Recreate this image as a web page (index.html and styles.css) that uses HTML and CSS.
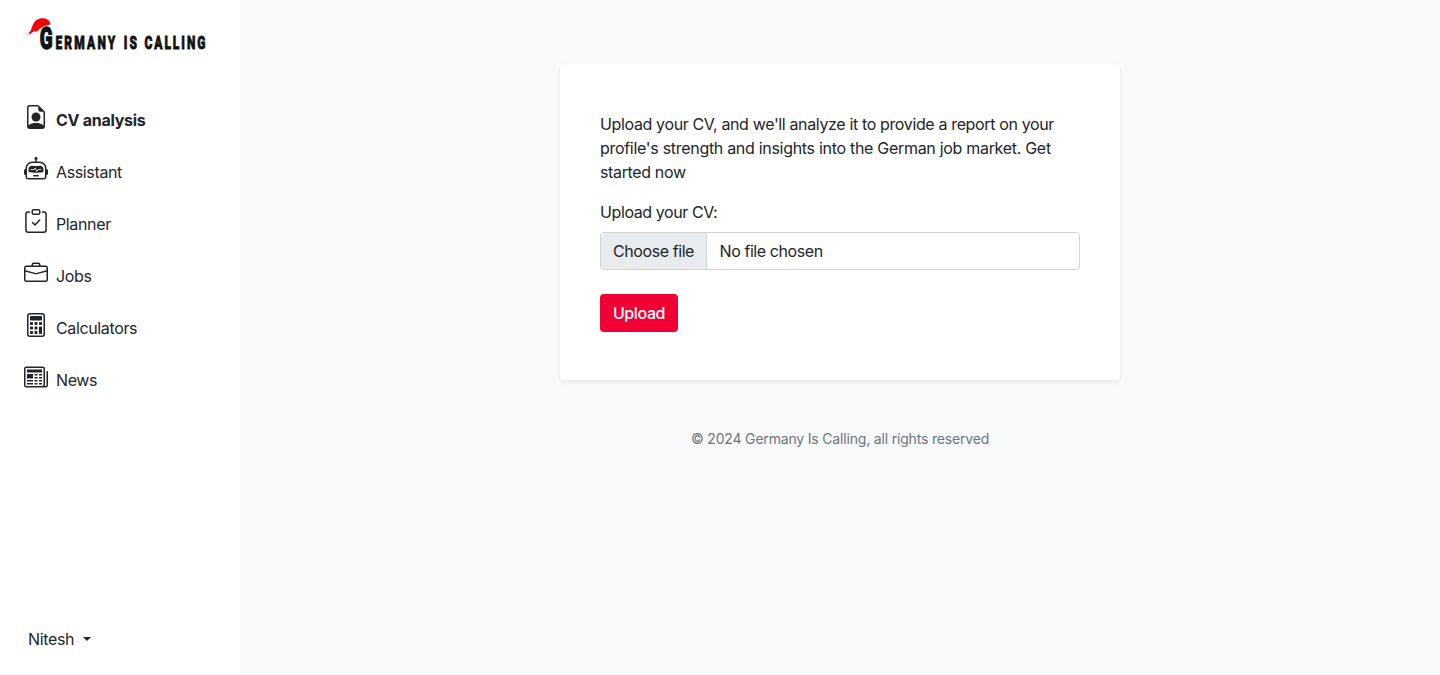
FILE: index.html
```html
<!DOCTYPE html>
<html lang="en">
<head>
<meta charset="utf-8">
<title>Germany Is Calling</title>
<link rel="stylesheet" href="styles.css">
</head>
<body>
<aside class="sidebar">
  <a class="logo" aria-label="Germany Is Calling">
    <svg width="188" height="40" viewBox="0 0 188 40">
      <path fill="#fff" stroke="#ddd" stroke-width=".4" d="M13 17Q18 11 26 9.500L27 12Q19 13 14 19z"/>
      <path fill="#f50008" d="M4 18.500Q7 16.500 8 12C10 5.500 14 3 19 3.200C24 3.800 26 6 26.500 9.500Q18 10.500 13 16.500Q10 15.500 7 18.500Q5 20.500 4 18.500z"/>
      <circle cx="3.500" cy="19" r="1.700" fill="#eee" stroke="#ccc" stroke-width=".5"/>
      <g class="logo-text">
        <text class="logo-cap" transform="translate(15.800 34.300) scale(.61 1)">G</text>
        <text class="logo-word" transform="translate(31.500 34) scale(.63 1)" textLength="95" lengthAdjust="spacing">ERMANY</text>
        <text class="logo-word" transform="translate(99.800 34) scale(.63 1)" textLength="21" lengthAdjust="spacing">IS</text>
        <text class="logo-word" transform="translate(120.400 34) scale(.63 1)" textLength="97" lengthAdjust="spacing">CALLING</text>
      </g>
    </svg>
  </a>
  <nav class="nav">
    <a class="nav-item active"><svg class="icon" viewBox="0 0 16 16"><path d="M11 8a3 3 0 1 1-6 0 3 3 0 0 1 6 0"/><path d="M14 14V4.500L9.500 0H4a2 2 0 0 0-2 2v12a2 2 0 0 0 2 2h8a2 2 0 0 0 2-2M9.500 3A1.500 1.500 0 0 0 11 4.500h2v9.255S12 12 8 12s-5 1.755-5 1.755V2a1 1 0 0 1 1-1h5.500z"/></svg><span>CV analysis</span></a>
    <a class="nav-item"><svg class="icon" viewBox="0 0 16 16"><path d="M6 12.500a.5.5 0 0 1 .5-.5h3a.5.5 0 0 1 0 1h-3a.5.5 0 0 1-.5-.5M3 8.062C3 6.760 4.235 5.765 5.530 5.886a26.600 26.600 0 0 0 4.940 0C11.765 5.765 13 6.760 13 8.062v1.157a.93.93 0 0 1-.765.935c-.845.147-2.340.346-4.235.346s-3.390-.2-4.235-.346A.93.93 0 0 1 3 9.219zm4.542-.827a.25.25 0 0 0-.217.068l-.92.9a25 25 0 0 1-1.871-.183.25.25 0 0 0-.068.495c.55.076 1.232.149 2.020.193a.25.25 0 0 0 .189-.071l.754-.736.847 1.710a.25.25 0 0 0 .404.062l.932-.97a25 25 0 0 0 1.922-.188.25.25 0 0 0-.068-.495c-.538.074-1.207.145-1.980.189a.25.25 0 0 0-.166.076l-.754.785-.842-1.700a.25.25 0 0 0-.182-.135"/><path d="M8.500 1.866a1 1 0 1 0-1 0V3h-2A4.500 4.500 0 0 0 1 7.500V8a1 1 0 0 0-1 1v2a1 1 0 0 0 1 1v1a2 2 0 0 0 2 2h10a2 2 0 0 0 2-2v-1a1 1 0 0 0 1-1V9a1 1 0 0 0-1-1v-.5A4.500 4.500 0 0 0 10.500 3h-2zM14 7.500V13a1 1 0 0 1-1 1H3a1 1 0 0 1-1-1V7.500A3.500 3.500 0 0 1 5.500 4h5A3.500 3.500 0 0 1 14 7.500"/></svg><span>Assistant</span></a>
    <a class="nav-item"><svg class="icon line" viewBox="0 0 24 24"><rect x="8.200" y=".8" width="7.600" height="4.500" rx="1.500"/><path d="M5.500 3H4A2.200 2.200 0 0 0 1.900 5.200V21A2.200 2.200 0 0 0 4.100 23.200H19.900A2.200 2.200 0 0 0 22.100 21V5.200A2.200 2.200 0 0 0 20 3H18.500M8.500 13.500l2.500 2.500 4.700-5"/></svg><span>Planner</span></a>
    <a class="nav-item"><svg class="icon" viewBox="0 0 16 16"><path d="M6.500 1A1.500 1.500 0 0 0 5 2.500V3H1.500A1.500 1.500 0 0 0 0 4.500v8A1.500 1.500 0 0 0 1.500 14h13a1.500 1.500 0 0 0 1.500-1.500v-8A1.500 1.500 0 0 0 14.500 3H11v-.5A1.500 1.500 0 0 0 9.500 1zm0 1h3a.5.5 0 0 1 .5.5V3H6v-.5a.5.5 0 0 1 .5-.5m1.886 6.914L15 7.151V12.500a.5.5 0 0 1-.5.5h-13a.5.5 0 0 1-.5-.5V7.150l6.614 1.764a1.500 1.500 0 0 0 .772 0M1.500 4h13a.5.5 0 0 1 .5.5v1.616L8.129 7.948a.5.5 0 0 1-.258 0L1 6.116V4.500a.5.5 0 0 1 .5-.5"/></svg><span>Jobs</span></a>
    <a class="nav-item"><svg class="icon" viewBox="0 0 16 16"><path d="M12 1a1 1 0 0 1 1 1v12a1 1 0 0 1-1 1H4a1 1 0 0 1-1-1V2a1 1 0 0 1 1-1zM4 0a2 2 0 0 0-2 2v12a2 2 0 0 0 2 2h8a2 2 0 0 0 2-2V2a2 2 0 0 0-2-2z"/><path d="M4 2.500a.5.5 0 0 1 .5-.5h7a.5.5 0 0 1 .5.5v2a.5.5 0 0 1-.5.5h-7a.5.5 0 0 1-.5-.5zm0 4a.5.5 0 0 1 .5-.5h1a.5.5 0 0 1 .5.5v1a.5.5 0 0 1-.5.5h-1a.5.5 0 0 1-.5-.5zm0 3a.5.5 0 0 1 .5-.5h1a.5.5 0 0 1 .5.5v1a.5.5 0 0 1-.5.5h-1a.5.5 0 0 1-.5-.5zm0 3a.5.5 0 0 1 .5-.5h1a.5.5 0 0 1 .5.5v1a.5.5 0 0 1-.5.5h-1a.5.5 0 0 1-.5-.5zm3-6a.5.5 0 0 1 .5-.5h1a.5.5 0 0 1 .5.5v1a.5.5 0 0 1-.5.5h-1a.5.5 0 0 1-.5-.5zm0 3a.5.5 0 0 1 .5-.5h1a.5.5 0 0 1 .5.5v1a.5.5 0 0 1-.5.5h-1a.5.5 0 0 1-.5-.5zm0 3a.5.5 0 0 1 .5-.5h1a.5.5 0 0 1 .5.5v1a.5.5 0 0 1-.5.5h-1a.5.5 0 0 1-.5-.5zm3-6a.5.5 0 0 1 .5-.5h1a.5.5 0 0 1 .5.5v1a.5.5 0 0 1-.5.5h-1a.5.5 0 0 1-.5-.5zm0 3a.5.5 0 0 1 .5-.5h1a.5.5 0 0 1 .5.5v4a.5.5 0 0 1-.5.5h-1a.5.5 0 0 1-.5-.5z"/></svg><span>Calculators</span></a>
    <a class="nav-item"><svg class="icon" viewBox="0 0 16 16"><path d="M0 2.500A1.500 1.500 0 0 1 1.500 1h11A1.500 1.500 0 0 1 14 2.500v10.528c0 .3-.05.654-.238.972h.738a.5.5 0 0 0 .5-.5v-9a.5.5 0 0 1 1 0v9a1.500 1.500 0 0 1-1.500 1.500H1.497A1.497 1.497 0 0 1 0 13.500zM12 14c.37 0 .654-.211.853-.441.092-.106.147-.279.147-.531V2.500a.5.5 0 0 0-.5-.5h-11a.5.5 0 0 0-.5.5v11c0 .278.223.5.497.5z"/><path d="M2 3h10v2H2zm0 3h4v3H2zm0 4h4v1H2zm0 2h4v1H2zm5-6h2v1H7zm3 0h2v1h-2zM7 8h2v1H7zm3 0h2v1h-2zm-3 2h2v1H7zm3 0h2v1h-2zm-3 2h2v1H7zm3 0h2v1h-2z"/></svg><span>News</span></a>
  </nav>
  <div class="user"><span>Nitesh</span><i class="caret"></i></div>
</aside>
<main class="main">
  <section class="card">
    <p class="intro">Upload your CV, and we'll analyze it to provide a report on your<br><span class="intro-wide">profile's strength and insights into the German job market. Get</span><br>started now</p>
    <div class="label">Upload your CV:</div>
    <div class="file"><span class="file-button">Choose file</span><span class="file-name">No file chosen</span></div>
    <button class="upload">Upload</button>
  </section>
  <footer class="footer">© 2024 Germany Is Calling, all rights reserved</footer>
</main>
</body>
</html>
```
FILE: styles.css
```css
* { box-sizing: border-box; }
body {
  margin: 0;
  display: flex;
  height: 675px;
  background: #f8f9fb;
  color: #212529;
  font: 16px/24px Inter, sans-serif;
  letter-spacing: -0.36px;
}
.sidebar {
  display: flex;
  flex-direction: column;
  width: 240px;
  padding: 15px 24px 24px;
  background: #fff;
}
.logo, .logo svg { display: block; }
.logo svg { overflow: visible; }
.logo-text { fill: #111; stroke: #111; stroke-width: .8; font-family: "Roboto", sans-serif; font-weight: 900; letter-spacing: 0; }
.logo-cap { font-size: 31px; stroke-width: 1.3; }
.logo-word { font-size: 19px; }
.nav { display: flex; flex-direction: column; gap: 12px; margin-top: 45px; }
.nav-item { display: flex; gap: 8px; height: 40px; padding-top: 5px; }
.nav-item span { padding-top: 3px; }
.active { font-weight: 700; letter-spacing: -0.27px; }
.icon { width: 24px; height: 24px; fill: currentColor; flex: none; }
.line { fill: none; stroke: currentColor; stroke-width: 1.5; stroke-linecap: round; stroke-linejoin: round; }
.user { display: flex; align-items: center; gap: 9px; margin-top: auto; padding-left: 4px; }
.caret { border: 4.8px solid transparent; border-top-color: currentColor; border-bottom: 0; }
.main { display: flex; flex: 1; flex-direction: column; align-items: center; padding-top: 64px; }
.card {
  width: 560px;
  height: 316px;
  padding: 48px 40px;
  background: #fff;
  border-radius: 4px;
  box-shadow: 0 2px 4px rgba(0, 0, 0, .075);
}
.intro { margin: 0 0 16px; white-space: nowrap; }
.intro-wide { letter-spacing: -0.3px; }
.label { margin-bottom: 8px; letter-spacing: -0.4px; }
.file { display: flex; height: 38px; border: 1px solid #ced4da; border-radius: 4px; overflow: hidden; letter-spacing: -0.42px; }
.file-button { width: 106px; padding: 6px 12px; background: #e9ecef; border-right: 1px solid #ced4da; white-space: nowrap; }
.file-name { padding: 6px 12.5px; }
.upload {
  width: 78px;
  height: 38px;
  margin-top: 24px;
  padding: 0;
  border: 0;
  border-radius: 4px;
  background: #f00034;
  color: #fff;
  font: 500 16px/24px Inter, sans-serif;
  letter-spacing: -0.4px;
}
.footer { margin-top: 48px; color: #6c757d; font-size: 14px; line-height: 21px; letter-spacing: -0.18px; }
```
